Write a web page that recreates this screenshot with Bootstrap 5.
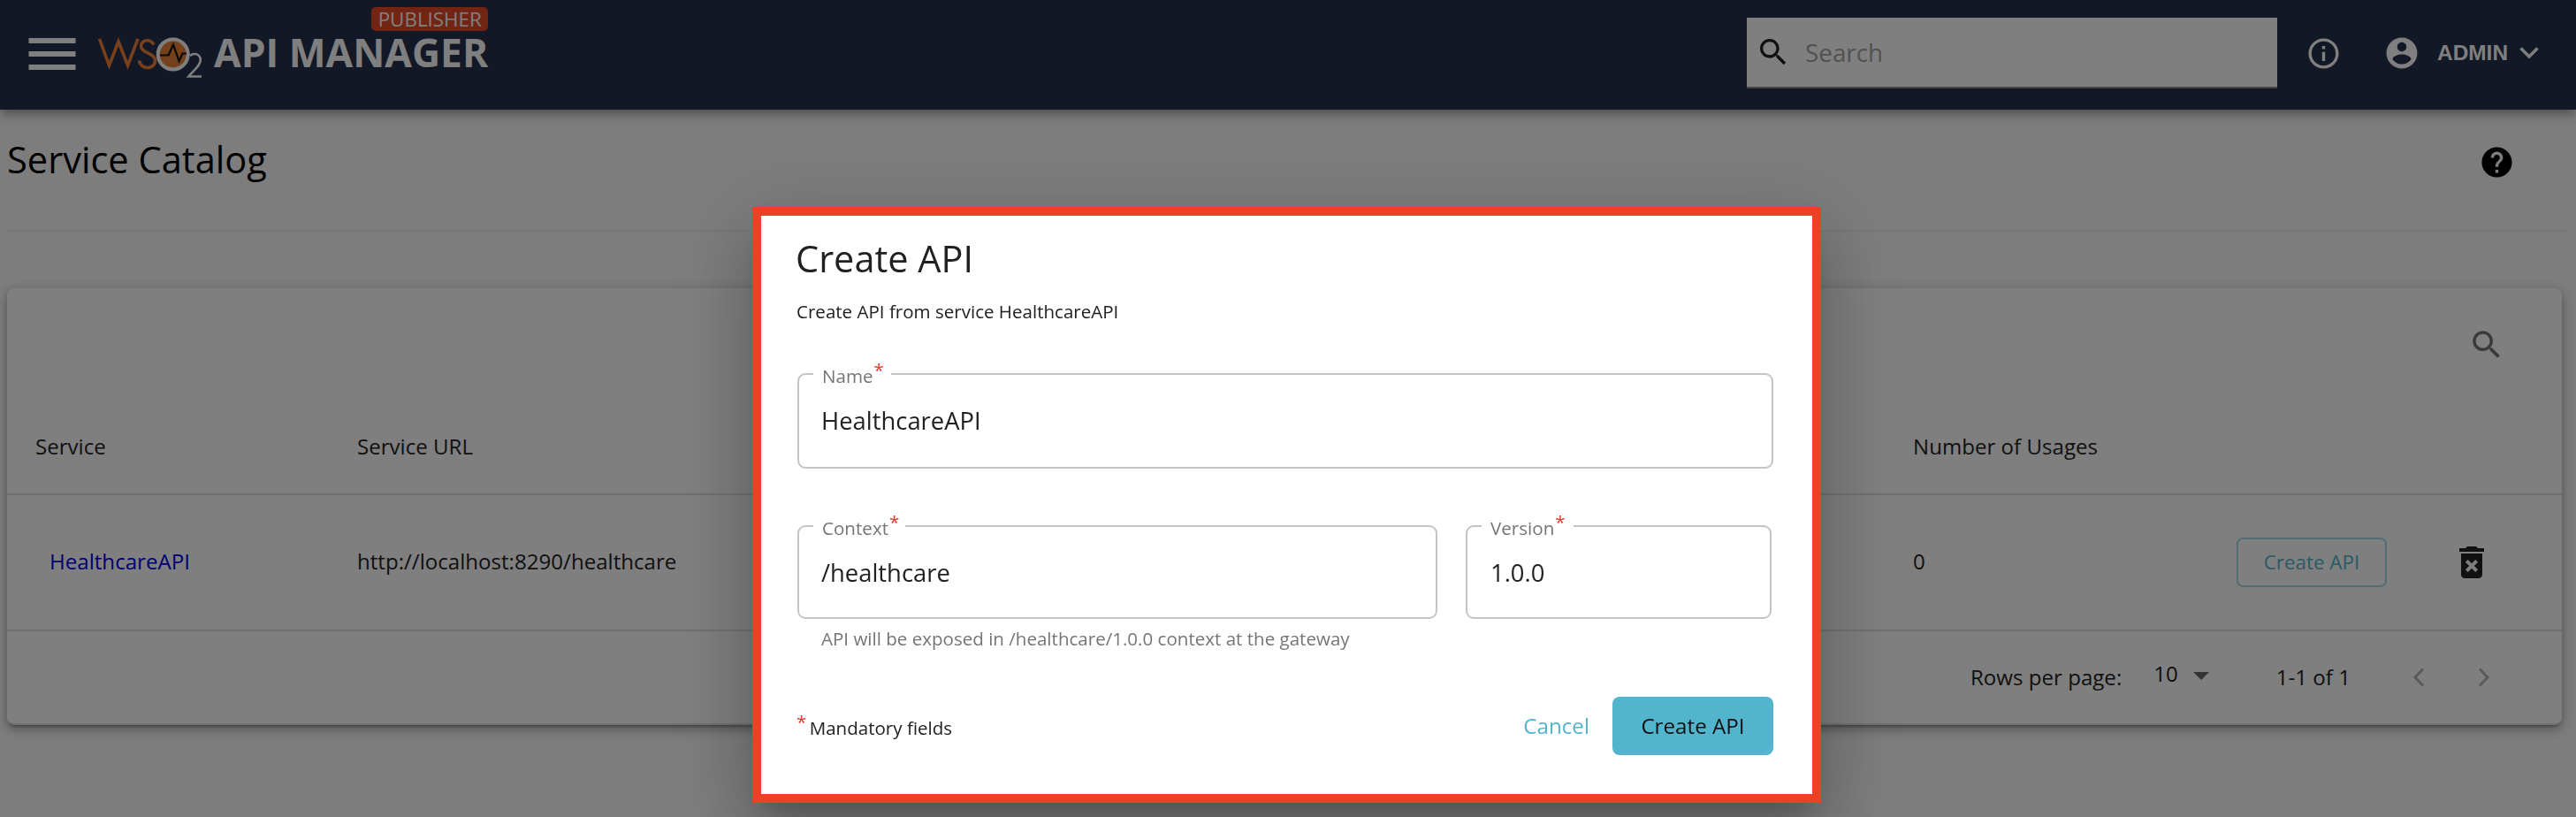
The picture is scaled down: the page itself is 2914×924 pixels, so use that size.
<!DOCTYPE html>
<html lang="en">
<head>
<meta charset="utf-8">
<title>Service Catalog</title>
<link rel="stylesheet" href="https://cdn.jsdelivr.net/npm/bootstrap@5.3.0/dist/css/bootstrap.min.css">
<style>
body{font-family:"Open Sans",sans-serif;font-size:24.1px;line-height:1.5;color:#222;background:#fafafa;height:924px;overflow:hidden}
svg{display:block;flex:none}
.topbar{height:124px;background:#24304a;box-shadow:0 4px 8px -2px rgba(0,0,0,.2),0 8px 10px rgba(0,0,0,.14),0 2px 20px rgba(0,0,0,.12);padding:0 42px 4px 24px;color:#fff;position:relative}
.burger{margin-top:-2px}
.logo{margin:-2px 0 0 8px}
.brand-wrap{margin:-2px 0 0 12px}
.brand-name{font-weight:700;font-size:44.4px;line-height:45px;white-space:nowrap}
.pub{font-size:22.4px;line-height:27px;height:27px;width:132px;border-radius:5px;background:#e64a28;text-align:center;right:0;top:-28.500px}
.searchbox{width:600px;height:80px;background:#fff;border-bottom:2px solid #949494;padding-left:10px;font-size:27.8px;color:#a3a3a3}
.searchbox span{padding-top:2px}
.admin{font-family:"Liberation Sans",sans-serif;font-weight:700;font-size:24.4px;line-height:1}
.page-head{height:138px;margin:0 11px 0 8px;border-bottom:2px solid #ececec;padding-right:58px}
.page-head h1{font-size:41.6px;font-weight:400;color:#000;line-height:1;margin:-22px 0 0}
.tbl-card{margin:64px 16px 0 8px;height:494px;background:#fff;border:0;border-bottom:2px solid #e0e0e0;border-radius:8px;box-shadow:0 4px 2px -2px rgba(0,0,0,.2),0 4px 10px rgba(0,0,0,.2),0 4px 16px rgba(0,0,0,.2)}
.tools{height:116px;padding:43px 64px 0 0}
.grid-row{display:grid;grid-template-columns:364px 1760px 366px 1fr;padding-left:32px;border-bottom:2px solid #e0e0e0;align-items:center}
.hrow{height:118px;padding-top:10px}.drow{height:154px}
.drow>a,.drow>span{margin-top:-1px}
.svc-link{color:#0000e6;text-decoration:none;padding-left:16px}
.btn-mini{width:170px;height:56px;border:2px solid #a9d9e6;border-radius:7px;color:#53b4cd;font-size:22.400px;padding:0;line-height:52px}
.pager{height:104px;padding-right:81px}
.modal-backdrop.dim{opacity:.5;width:100%;height:100%}
.dlg-wrap{position:fixed;left:851px;top:234px;width:1209px;height:674px;z-index:1060}
.modal-content.dlg{background:#fff;border:10px solid #ec4126;border-radius:0;height:674px;padding:0 44px 0 41px;color:#212121;box-shadow:0 22px 30px -14px rgba(0,0,0,.2),0 48px 76px 6px rgba(0,0,0,.14),0 18px 92px 16px rgba(0,0,0,.12)}
.dlg h2{font-size:41.500px;font-weight:400;line-height:56px;margin:20px 0 0 -2px}
.sub{font-size:20.550px;line-height:28px;margin:18px 0 0 -1px}
.fset{border:2px solid #c4c4c4;border-radius:9px;padding:0 25px;font-size:27.400px;position:relative;color:#212121}
.fset label{position:absolute;left:16px;top:-14px;height:28px;line-height:30px;font-size:20.600px;color:#757575;background:#fff;padding-left:10px}
.star{color:#e3362c;font-size:20.600px;position:relative;top:-7px;margin-left:1px}
.help{font-size:20.550px;line-height:28px;color:#757575;padding-left:27px;margin-top:8px}
.acts{margin-top:52px;height:66px}
.btn-main{width:182px;height:66px;background:#53b4cd;border:0;border-radius:8px;color:#111;font-size:24.200px;padding:0}
.cancel{color:#53b4cd;font-size:24.200px;text-decoration:none;margin-right:26px}
</style>
</head>
<body>
<header class="topbar d-flex align-items-center">
  <svg class="burger" width="78" height="78" viewBox="0 0 78 78"><path fill="#fff" d="M8.500 23h53v6h-53zm0 15h53v6h-53zm0 15h53v6h-53z"/></svg>
  <svg class="logo" width="120" height="60" viewBox="0 0 120 60">
    <g fill="none" stroke-width="3.600">
      <path stroke="#f08238" d="M2.500 15L13.500 45L24 18L34.500 45L46 15"/>
      <path stroke="#f08238" d="M64 21.500c-2-3.500-5-4.800-7.500-4.800c-4 0-7 3-7 6.500c0 8 16 7.500 16 16.300c0 5-4 8-8.500 8s-9-3-9.500-8"/>
      <circle cx="85.700" cy="32.500" r="17" fill="#ea8038" stroke="#fff" stroke-width="4"/>
      <path stroke="#111" stroke-width="2.200" d="M71 33.500h9.500L86 21.500L92.500 40l4-8.500h4.500"/>
      <path stroke="#fff" stroke-width="2.600" d="M105 34c1.500-1.500 3-2 5-2c4 0 6.800 3 6.800 7c0 6-7 11-13.500 18.500H118"/>
    </g>
  </svg>
  <div class="brand-wrap position-relative"><div class="brand-name">API MANAGER</div><span class="pub position-absolute">PUBLISHER</span></div>
  <div class="searchbox d-flex align-items-center ms-auto">
    <svg width="40" height="40" viewBox="0 0 24 24" fill="#212121"><path d="M15.500 14h-.79l-.28-.27C15.410 12.590 16 11.110 16 9.500 16 5.910 13.090 3 9.500 3S3 5.910 3 9.500 5.910 16 9.500 16c1.610 0 3.090-.59 4.230-1.570l.27.28v.79l5 4.990L20.490 19l-4.990-5zm-6 0C7.010 14 5 11.990 5 9.500S7.010 5 9.500 5 14 7.010 14 9.500 11.990 14 9.500 14z"/></svg>
    <span class="ms-3">Search</span>
  </div>
  <svg style="margin-left:32px" width="41" height="41" viewBox="0 0 24 24" fill="#fff"><path d="M11 7h2v2h-2zm0 4h2v6h-2zm1-9C6.480 2 2 6.480 2 12s4.480 10 10 10 10-4.480 10-10S17.520 2 12 2zm0 18c-4.410 0-8-3.590-8-8s3.590-8 8-8 8 3.590 8 8-3.590 8-8 8z"/></svg>
  <svg style="margin-left:47px" width="42" height="42" viewBox="0 0 24 24" fill="#fff"><path d="M12 2C6.480 2 2 6.480 2 12s4.480 10 10 10 10-4.480 10-10S17.520 2 12 2zm0 3c1.660 0 3 1.340 3 3s-1.340 3-3 3-3-1.340-3-3 1.340-3 3-3zm0 14.200c-2.500 0-4.710-1.280-6-3.220.03-1.990 4-3.080 6-3.080 1.990 0 5.970 1.090 6 3.080-1.290 1.940-3.500 3.220-6 3.220z"/></svg>
  <span class="admin" style="margin-left:19px">ADMIN</span>
  <svg style="margin-left:13px" width="22" height="14" viewBox="0 0 22 14"><path d="M1.500 1.500L11 11L20.500 1.500" fill="none" stroke="#fff" stroke-width="3.500"/></svg>
</header>
<div class="page-head d-flex align-items-center justify-content-between">
  <h1>Service Catalog</h1>
  <svg style="margin-top:-17px" width="41" height="41" viewBox="0 0 24 24"><path d="M12 2C6.480 2 2 6.480 2 12s4.480 10 10 10 10-4.480 10-10S17.520 2 12 2zm1 17h-2v-2h2v2zm2.070-7.750l-.9.92C13.450 12.900 13 13.500 13 15h-2v-.5c0-1.100.45-2.100 1.170-2.830l1.240-1.260c.37-.36.59-.86.59-1.410 0-1.100-.9-2-2-2s-2 .9-2 2H8c0-2.210 1.790-4 4-4s4 1.790 4 4c0 .88-.36 1.680-.93 2.250z"/></svg>
</div>
<main class="card tbl-card">
  <div class="tools d-flex justify-content-end"><svg width="42" height="42" viewBox="0 0 24 24" fill="#757575"><path d="M15.500 14h-.79l-.28-.27C15.410 12.590 16 11.110 16 9.500 16 5.910 13.090 3 9.500 3S3 5.910 3 9.500 5.910 16 9.500 16c1.610 0 3.090-.59 4.230-1.570l.27.28v.79l5 4.990L20.490 19l-4.990-5zm-6 0C7.010 14 5 11.990 5 9.500S7.010 5 9.500 5 14 7.010 14 9.500 11.990 14 9.500 14z"/></svg></div>
  <div class="grid-row hrow"><span>Service</span><span>Service URL</span><span>Number of Usages</span></div>
  <div class="grid-row drow"><a class="svc-link" href="#">HealthcareAPI</a><span>http://localhost:8290/healthcare</span><span>0</span>
    <div class="d-flex align-items-center"><button class="btn btn-mini">Create API</button>
    <svg style="margin-left:72px" width="48" height="48" viewBox="0 0 24 24" fill="#222"><path d="M6 19c0 1.100.9 2 2 2h8c1.100 0 2-.9 2-2V7H6v12zm2.460-7.120l1.410-1.410L12 12.590l2.120-2.120 1.410 1.410L13.410 14l2.120 2.120-1.410 1.410L12 15.410l-2.120 2.120-1.410-1.410L10.590 14l-2.130-2.120zM15.500 4l-1-1h-5l-1 1H5v2h14V4z"/></svg></div>
  </div>
  <div class="pager d-flex align-items-center justify-content-end">
    <span>Rows per page:</span><span style="margin:-8px 0 0 36px">10</span>
    <svg style="margin:-4px 0 0 17px" width="18" height="9" viewBox="0 0 18 9"><path d="M0 0h18L9 9z" fill="#666"/></svg>
    <span style="margin-left:76px">1-1 of 1</span>
    <svg style="margin-left:70px" width="14" height="22" viewBox="0 0 14 22"><path d="M12 1.500L3 11l9 9.500" fill="none" stroke="#b4b4b4" stroke-width="3"/></svg>
    <svg style="margin-left:60px" width="14" height="22" viewBox="0 0 14 22"><path d="M2 1.500L11 11l-9 9.500" fill="none" stroke="#b4b4b4" stroke-width="3"/></svg>
  </div>
</main>
<div class="modal-backdrop dim"></div>
<div class="dlg-wrap">
  <div class="modal-content dlg">
    <h2>Create API</h2>
    <p class="sub">Create API from service HealthcareAPI</p>
    <div class="fset d-flex align-items-center" style="height:108px;margin-top:56px"><label style="width:88px">Name<span class="star">*</span></label>HealthcareAPI</div>
    <div class="d-flex" style="margin-top:64px;gap:32px">
      <div class="fset d-flex align-items-center" style="height:106px;width:724px;padding-top:2px"><label style="width:104px">Context<span class="star">*</span></label>/healthcare</div>
      <div class="fset d-flex align-items-center" style="height:106px;width:346px;padding-top:2px;padding-left:26px"><label style="width:104px">Version<span class="star">*</span></label>1.0.0</div>
    </div>
    <div class="help">API will be exposed in /healthcare/1.0.0 context at the gateway</div>
    <div class="acts d-flex align-items-center">
      <span class="me-auto sub" style="margin:3px 0 0 -2px"><span class="star" style="margin-right:-2px">*</span> Mandatory fields</span>
      <a class="cancel" href="#">Cancel</a><button class="btn btn-main">Create API</button>
    </div>
  </div>
</div>
<script src="https://cdn.jsdelivr.net/npm/bootstrap@5.3.0/dist/js/bootstrap.bundle.min.js"></script>
</body>
</html>
